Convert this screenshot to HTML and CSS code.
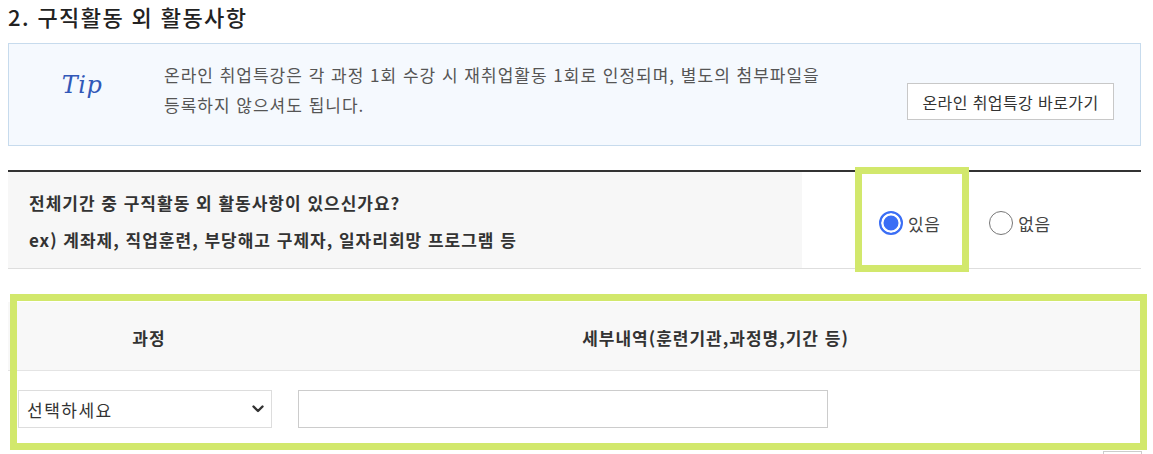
FILE: index.html
```html
<!DOCTYPE html>
<html lang="ko">
<head>
<meta charset="utf-8">
<title>구직활동 외 활동사항</title>
<link rel="stylesheet" href="styles.css">
</head>
<body>
<div class="page">
  <h2 class="title">2. 구직활동 외 활동사항</h2>

  <div class="tip">
    <div class="tip-logo">Tip</div>
    <p class="tip-text">온라인 취업특강은 각 과정 1회 수강 시 재취업활동 1회로 인정되며, 별도의 첨부파일을<br>등록하지 않으셔도 됩니다.</p>
    <button class="tip-btn" type="button">온라인 취업특강 바로가기</button>
  </div>

  <div class="question">
    <div class="q-label">
      <p>전체기간 중 구직활동 외 활동사항이 있으신가요?</p>
      <p>ex) 계좌제, 직업훈련, 부당해고 구제자, 일자리회망 프로그램 등</p>
    </div>
    <div class="q-options">
      <label class="radio on"><span class="dot"></span>있음</label>
      <label class="radio"><span class="dot"></span>없음</label>
    </div>
    <div class="hl hl-radio"></div>
  </div>

  <div class="detail">
    <div class="d-row d-head">
      <div class="c1">과정</div>
      <div class="c2">세부내역(훈련기관,과정명,기간 등)</div>
    </div>
    <div class="d-row d-body">
      <div class="c1">
        <div class="select-wrap">
          <select class="select"><option>선택하세요</option></select>
          <svg class="chev" width="12" height="8" viewBox="0 0 12 8"><path d="M1.5 1.5 L6 6 L10.5 1.5" fill="none" stroke="#333" stroke-width="2.4" stroke-linecap="round" stroke-linejoin="round"/></svg>
        </div>
      </div>
      <div class="c2"><input class="text-input" type="text"></div>
    </div>
    <div class="hl hl-table"></div>
  </div>
  <div class="more-row"><span class="more-btn"></span></div>
</div>
</body>
</html>
```

FILE: styles.css
```css
html, body {
  margin: 0;
  padding: 0;
  background: #fff;
}
body {
  font-family: "Noto Sans CJK KR", "Noto Sans", sans-serif;
  color: #333;
  overflow: hidden;
}
.page {
  width: 1133px;
  padding-left: 8px;
}
.title {
  margin: 0 0 11px;
  height: 32px;
  font-size: 22px;
  line-height: 32px;
  font-weight: 500;
  color: #222;
  letter-spacing: 1.4px;
}

/* Tip box */
.tip {
  display: flex;
  align-items: flex-start;
  height: 101px;
  border: 1px solid #c7dbed;
  background: #f5f9fe;
}
.tip-logo {
  width: 146px;
  margin-top: 25px;
  text-align: center;
  font-family: "DejaVu Serif", "Liberation Serif", serif;
  font-style: italic;
  font-size: 24px;
  line-height: 32px;
  color: #3158b8;
  letter-spacing: 0.5px;
}
.tip-text {
  margin: 16px 0 0 9px;
  font-size: 17px;
  line-height: 30px;
  color: #555;
  letter-spacing: 1px;
}
.tip-btn {
  margin: 39px 26px 0 auto;
  width: 207px;
  height: 37px;
  padding: 0;
  border: 1px solid #c8c8c8;
  background: #fff;
  font-family: inherit;
  font-size: 16px;
  letter-spacing: 0.4px;
  color: #333;
}

/* Question row */
.question {
  position: relative;
  display: flex;
  margin-top: 24px;
  border-top: 2px solid #333;
  border-bottom: 1px solid #dedede;
  height: 96px;
}
.q-label {
  width: 773px;
  padding-left: 21px;
  background: #f7f7f7;
  display: flex;
  flex-direction: column;
  justify-content: center;
  padding-top: 2px;
}
.q-label p {
  margin: 0;
  font-size: 17px;
  font-weight: 700;
  line-height: 37px;
  color: #333;
  letter-spacing: 1px;
}
.q-options {
  display: flex;
  align-items: center;
  padding-left: 77px;
  padding-top: 6px;
  gap: 49px;
}
.radio {
  display: flex;
  align-items: center;
  gap: 5px;
  font-size: 17px;
  color: #444;
  letter-spacing: 0.5px;
}
.dot {
  box-sizing: border-box;
  width: 24px;
  height: 24px;
  border-radius: 50%;
  border: 1.5px solid #777;
  background: #fff;
}
.radio.on .dot {
  border: 2px solid #3b6ef5;
  background: #3b6ef5;
  box-shadow: inset 0 0 0 2.5px #fff;
}

/* highlight overlays */
.hl {
  position: absolute;
  box-sizing: border-box;
  border: 7px solid #d2e86c;
  pointer-events: none;
}
.hl-radio {
  left: 847px;
  top: -5px;
  width: 114px;
  height: 105px;
}

/* detail table */
.detail {
  position: relative;
  margin-top: 25px;
  padding-top: 8px;
  height: 148px;
}
.d-row {
  display: flex;
}
.d-head {
  height: 68px;
  background: #f8f8f8;
  border-bottom: 1px solid #e4e4e4;
  align-items: center;
  font-size: 17px;
  font-weight: 700;
  color: #333;
  letter-spacing: 1px;
}
.d-head .c1,
.d-head .c2 {
  text-align: center;
  padding-top: 2px;
}
.c1 {
  width: 282px;
}
.c2 {
  flex: 1;
}
.d-body {
  padding-top: 19px;
}
.d-body .c1 {
  padding-left: 10px;
  box-sizing: border-box;
}
.d-body .c2 {
  padding-left: 8px;
}
.select-wrap {
  position: relative;
  width: 254px;
}
.select {
  appearance: none;
  -webkit-appearance: none;
  box-sizing: border-box;
  width: 254px;
  height: 38px;
  border: 1px solid #ddd;
  background: #fff;
  padding: 0 0 0 8px;
  font-family: inherit;
  font-size: 17px;
  letter-spacing: 1.5px;
  color: #333;
}
.chev {
  position: absolute;
  right: 8px;
  top: 15px;
}
.text-input {
  box-sizing: border-box;
  width: 530px;
  height: 38px;
  border: 1px solid #ccc;
  background: #fff;
  margin: 0;
}
.hl-table {
  left: 2px;
  top: 0;
  width: 1137px;
  height: 156px;
}
.more-row {
  display: flex;
  justify-content: flex-end;
  margin-top: 1px;
}
.more-btn {
  width: 37px;
  height: 30px;
  border: 1px solid #ccc;
  margin-right: -1px;
  background: #fff;
}
```
